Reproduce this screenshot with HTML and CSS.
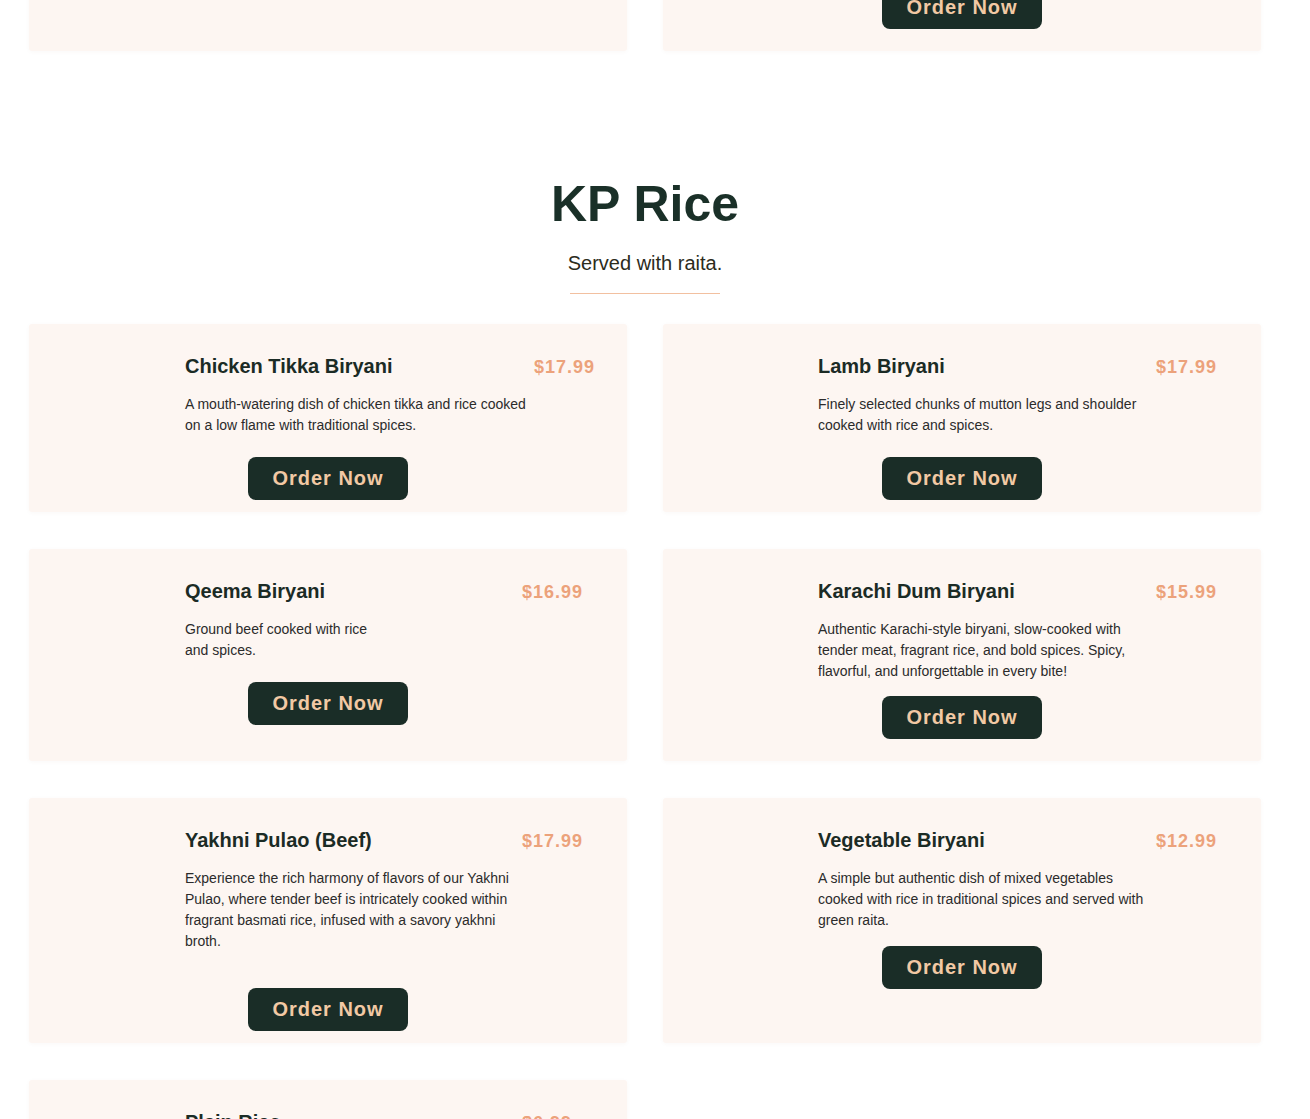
FILE: index.html
```html
<!DOCTYPE html>
<html lang="en">
<head>
<meta charset="utf-8">
<title>KP Rice – Menu</title>
<link rel="stylesheet" href="styles.css">
</head>
<body>
<main class="page">
  <section class="menu-section menu-section--prev">
    <div class="menu-grid">
      <article class="card">
        <div class="card-body">
          <div class="card-head"><h3 class="card-title">Chicken Karahi</h3><span class="card-price">$16.99</span></div>
          <p class="card-desc">Tender chicken cooked in a wok with tomatoes, ginger and green chillies.</p>
        </div>
        <button class="order-btn">Order Now</button>
      </article>
      <article class="card card--end">
        <div class="card-body">
          <div class="card-head"><h3 class="card-title">Lamb Karahi</h3><span class="card-price">$19.99</span></div>
          <p class="card-desc">Succulent pieces of lamb slow-cooked in a traditional karahi with fresh tomatoes, ginger, garlic and a blend of aromatic spices, finished with coriander.</p>
        </div>
        <button class="order-btn order-btn--gap-l">Order Now</button>
      </article>
    </div>
  </section>

  <section class="menu-section menu-section--main">
    <header class="section-head">
      <h2 class="section-title">KP Rice</h2>
      <p class="section-sub">Served with raita.</p>
      <hr class="section-rule">
    </header>
    <div class="menu-grid">
      <article class="card">
        <div class="card-body card-body--wide">
          <div class="card-head"><h3 class="card-title">Chicken Tikka Biryani</h3><span class="card-price">$17.99</span></div>
          <p class="card-desc card-desc--wide">A mouth-watering dish of chicken tikka and rice cooked on a low flame with traditional spices.</p>
        </div>
        <button class="order-btn">Order Now</button>
      </article>
      <article class="card card--right">
        <div class="card-body">
          <div class="card-head"><h3 class="card-title">Lamb Biryani</h3><span class="card-price">$17.99</span></div>
          <p class="card-desc">Finely selected chunks of mutton legs and shoulder cooked with rice and spices.</p>
        </div>
        <button class="order-btn">Order Now</button>
      </article>

      <article class="card">
        <div class="card-body">
          <div class="card-head"><h3 class="card-title">Qeema Biryani</h3><span class="card-price">$16.99</span></div>
          <p class="card-desc card-desc--narrow">Ground beef cooked with rice and spices.</p>
        </div>
        <button class="order-btn">Order Now</button>
      </article>
      <article class="card card--right card--end">
        <div class="card-body">
          <div class="card-head"><h3 class="card-title">Karachi Dum Biryani</h3><span class="card-price">$15.99</span></div>
          <p class="card-desc">Authentic Karachi-style biryani, slow-cooked with tender meat, fragrant rice, and bold spices. Spicy, flavorful, and unforgettable in every bite!</p>
        </div>
        <button class="order-btn order-btn--gap-s">Order Now</button>
      </article>

      <article class="card">
        <div class="card-body">
          <div class="card-head"><h3 class="card-title">Yakhni Pulao (Beef)</h3><span class="card-price">$17.99</span></div>
          <p class="card-desc">Experience the rich harmony of flavors of our Yakhni Pulao, where tender beef is intricately cooked within fragrant basmati rice, infused with a savory yakhni broth.</p>
        </div>
        <button class="order-btn order-btn--gap-l">Order Now</button>
      </article>
      <article class="card card--right">
        <div class="card-body">
          <div class="card-head"><h3 class="card-title">Vegetable Biryani</h3><span class="card-price">$12.99</span></div>
          <p class="card-desc">A simple but authentic dish of mixed vegetables cooked with rice in traditional spices and served with green raita.</p>
        </div>
        <button class="order-btn order-btn--gap-m">Order Now</button>
      </article>

      <article class="card">
        <div class="card-body card-body--short">
          <div class="card-head"><h3 class="card-title">Plain Rice</h3><span class="card-price">$6.99</span></div>
          <p class="card-desc">Fluffy steamed basmati rice.</p>
        </div>
        <button class="order-btn">Order Now</button>
      </article>
    </div>
  </section>
</main>
</body>
</html>
```

FILE: styles.css
```css
* {
  box-sizing: border-box;
}

html, body {
  margin: 0;
  padding: 0;
  background: #ffffff;
}

body {
  font-family: "Liberation Sans", Arial, sans-serif;
  color: #1b2b25;
}

.page {
  margin-top: -183px;
  padding-left: 29px;
  width: 1261px;
}

.menu-section--main {
  padding-top: 123px;
}

.section-head {
  display: flex;
  flex-direction: column;
  align-items: center;
  text-align: center;
}

.section-title {
  margin: 0;
  font-size: 50px;
  line-height: 60px;
  font-weight: 700;
  color: #1a3028;
}

.section-sub {
  margin: 17px 0 0;
  font-size: 20px;
  line-height: 24px;
  color: #2c2c1c;
}

.section-rule {
  margin: 18px 0 0;
  width: 150px;
  height: 1px;
  border: 0;
  background: #f2c0a0;
}

.menu-section--main .menu-grid {
  margin-top: 30px;
}

.menu-grid {
  display: grid;
  grid-template-columns: 598px 598px;
  column-gap: 36px;
  row-gap: 37px;
}

.card {
  display: flex;
  flex-direction: column;
  background: #fdf6f2;
  padding: 30px 0 12px;
  border-radius: 3px;
  box-shadow: 0 1px 4px rgba(120, 80, 50, 0.04);
}

.card--end {
  padding-bottom: 22px;
}

.card-body {
  padding: 0 44px 0 156px;
}

.card--right .card-body {
  padding-left: 155px;
}

.card-body--wide {
  padding-right: 32px;
}

.card-body--short {
  padding-right: 55px;
}

.card-head {
  display: flex;
  justify-content: space-between;
  align-items: center;
  height: 24px;
}

.card-title {
  margin: 0;
  font-size: 20px;
  line-height: 24px;
  font-weight: 700;
  color: #1b2b25;
}

.card-price {
  font-size: 18px;
  line-height: 24px;
  font-weight: 700;
  letter-spacing: 1px;
  color: #eca27b;
  padding-top: 2px;
}

.card-desc {
  margin: 16px 0 0;
  max-width: 332px;
  font-size: 14px;
  line-height: 21px;
  color: #2b2b2b;
}

.card-desc--wide {
  max-width: 350px;
}

.card-desc--narrow {
  max-width: 200px;
}

.order-btn {
  align-self: center;
  margin-top: 21px;
  padding: 10px 24px;
  border: 0;
  border-radius: 8px;
  background: #1a2d27;
  color: #f2c9a4;
  font-family: "Liberation Sans", Arial, sans-serif;
  font-size: 20px;
  line-height: 23px;
  font-weight: 700;
  letter-spacing: 1px;
  cursor: pointer;
}

.order-btn--gap-s {
  margin-top: 14px;
}

.order-btn--gap-m {
  margin-top: 15px;
}

.order-btn--gap-l {
  margin-top: 36px;
}
```
